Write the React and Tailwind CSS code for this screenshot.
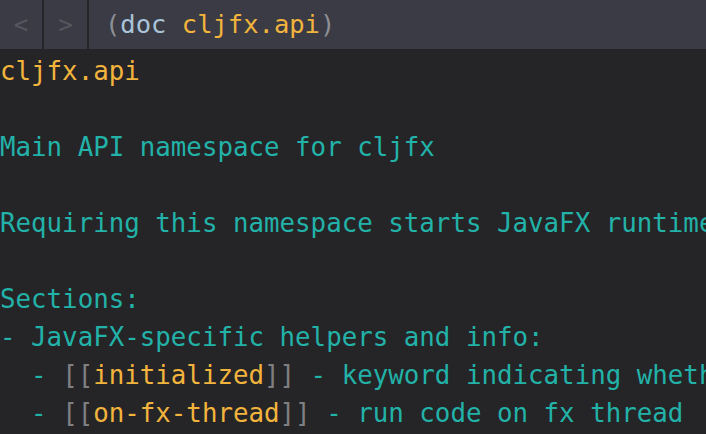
import React from "react";

const T = ({ children }) => <span className="text-[#22b2a8]">{children}</span>;
const G = ({ children }) => <span className="text-[#f2b43c]">{children}</span>;
const B = ({ children }) => <span className="text-[#7f7f82]">{children}</span>;

export default function App() {
  return (
    <div
      className="w-[706px] h-[434px] overflow-hidden bg-[#252528] flex flex-col"
      style={{ fontFamily: '"DejaVu Sans Mono", "Liberation Mono", monospace' }}
    >
      <div className="h-[49px] shrink-0 bg-[#3a3b44] flex items-stretch">
        <div className="w-[44px] flex items-center justify-center text-[#55565f] text-[24px] border-r-2 border-[#26262a]">
          &lt;
        </div>
        <div className="w-[45px] flex items-center justify-center text-[#55565f] text-[24px] border-r-2 border-[#26262a]">
          &gt;
        </div>
        <div className="flex items-center pl-[16px] text-[25.5px] whitespace-pre">
          <span className="text-[#8d8e96]">(</span>
          <span className="text-[#a9c3d9]">doc </span>
          <span className="text-[#f2b43c]">cljfx.api</span>
          <span className="text-[#8d8e96]">)</span>
        </div>
      </div>
      <div className="pt-[3px] text-[25.8px] leading-[38px] whitespace-pre">
        <div><G>cljfx.api</G></div>
        <div>&nbsp;</div>
        <div><T>Main API namespace for cljfx</T></div>
        <div>&nbsp;</div>
        <div><T>Requiring this namespace starts JavaFX runtime if it wasn't previously started</T></div>
        <div>&nbsp;</div>
        <div><T>Sections:</T></div>
        <div><T>- JavaFX-specific helpers and info:</T></div>
        <div><T>  - </T><B>[[</B><G>initialized</G><B>]]</B><T> - keyword indicating whether JavaFX is initialized</T></div>
        <div><T>  - </T><B>[[</B><G>on-fx-thread</G><B>]]</B><T> - run code on fx thread</T></div>
      </div>
    </div>
  );
}
